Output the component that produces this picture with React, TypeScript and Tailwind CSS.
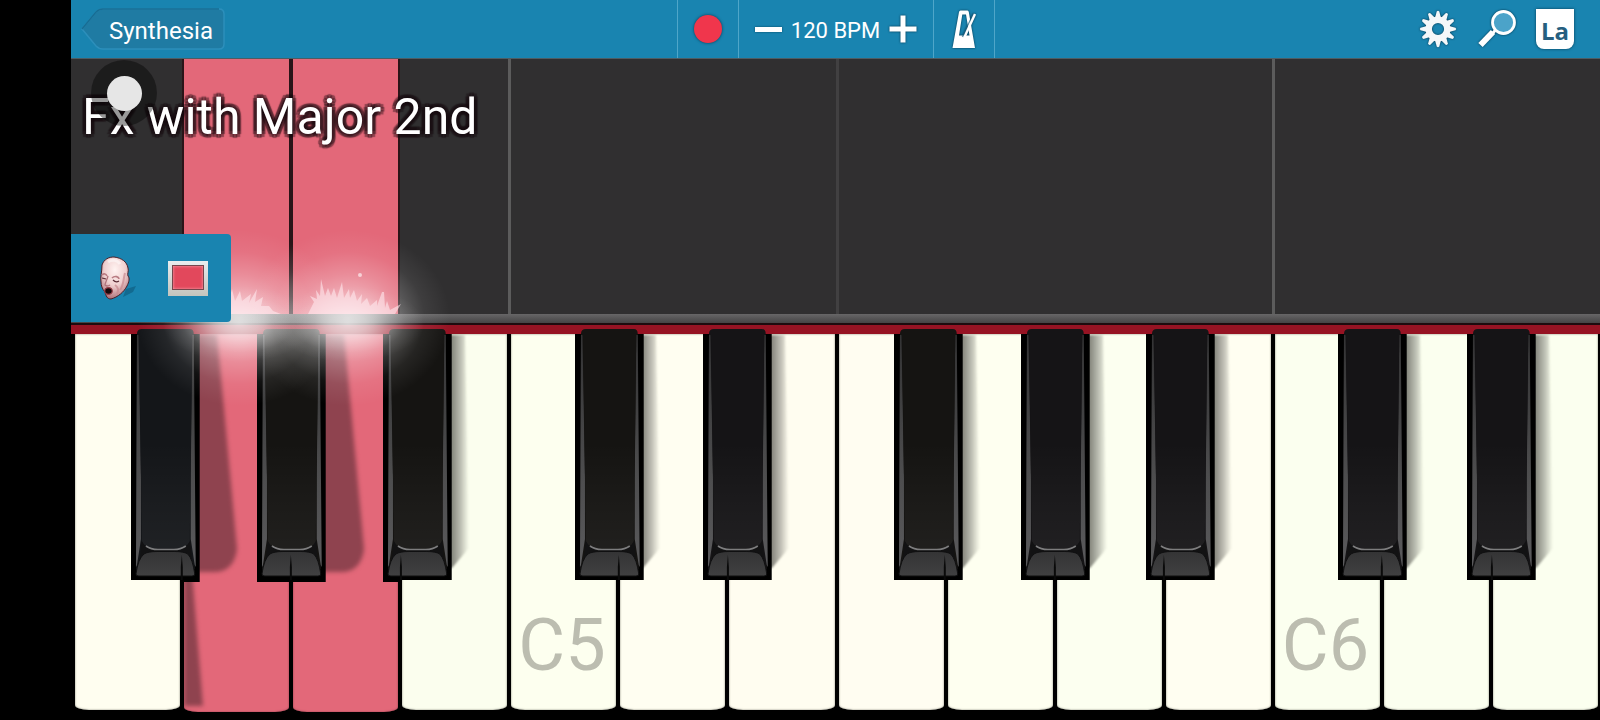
import React from 'react';

interface PianoKey {
  note: string;
  tint: string;
  lit?: boolean;
  label?: string;
  line?: string;
  sharp?: { note: string; left: string; seam: number; face: string };
}

const BLUE_FACE = '#141619';
const WARM_FACE = '#151412';
const VIOLET_FACE = '#151416';

const KEYS: PianoKey[] = [
  { note: 'F4', tint: 'bg-[#fffef0]', sharp: { note: 'F#4', left: 'left-[53%]', seam: 51, face: BLUE_FACE } },
  { note: 'G4', tint: 'bg-[#e36879]', lit: true, sharp: { note: 'G#4', left: 'left-[69%]', seam: 34, face: WARM_FACE } },
  { note: 'A4', tint: 'bg-[#e36879]', lit: true, sharp: { note: 'A#4', left: 'left-[84%]', seam: 18, face: WARM_FACE } },
  { note: 'B4', tint: 'bg-[#fbfeee]' },
  { note: 'C5', tint: 'bg-[#fdffef]', label: 'C5', line: 'bg-[#5c5c5c]', sharp: { note: 'C#5', left: 'left-[60%]', seam: 44, face: WARM_FACE } },
  { note: 'D5', tint: 'bg-[#fffef1]', sharp: { note: 'D#5', left: 'left-[78%]', seam: 25, face: VIOLET_FACE } },
  { note: 'E5', tint: 'bg-[#fffdf0]' },
  { note: 'F5', tint: 'bg-[#fffdf1]', line: 'bg-[#414041]', sharp: { note: 'F#5', left: 'left-[53%]', seam: 51, face: WARM_FACE } },
  { note: 'G5', tint: 'bg-[#fefff0]', sharp: { note: 'G#5', left: 'left-[69%]', seam: 34, face: VIOLET_FACE } },
  { note: 'A5', tint: 'bg-[#fcfff0]', sharp: { note: 'A#5', left: 'left-[84%]', seam: 18, face: VIOLET_FACE } },
  { note: 'B5', tint: 'bg-[#fffef1]' },
  { note: 'C6', tint: 'bg-[#fbffef]', label: 'C6', line: 'bg-[#5c5c5c]', sharp: { note: 'C#6', left: 'left-[60%]', seam: 44, face: VIOLET_FACE } },
  { note: 'D6', tint: 'bg-[#fbffef]', sharp: { note: 'D#6', left: 'left-[78%]', seam: 25, face: VIOLET_FACE } },
  { note: 'E6', tint: 'bg-[#fbffef]' },
];

const GEAR_TEETH = [0, 30, 60, 90, 120, 150, 180, 210, 240, 270, 300, 330];

const GearIcon = () => (
  <svg viewBox="-20 -20 40 40" className="w-10 h-10 drop-shadow-[0_0_1px_rgba(0,40,60,0.9)]">
    {GEAR_TEETH.map(angle => (
      <path key={angle} d="M-3 -11 L-1.3 -17.5 Q0 -19 1.3 -17.5 L3 -11 Z" fill="#f4f7f9" transform={`rotate(${angle})`} />
    ))}
    <circle r="9.3" fill="none" stroke="#f4f7f9" strokeWidth="6.4" />
  </svg>
);

const MagnifierIcon = () => (
  <svg viewBox="0 0 40 40" className="w-10 h-10 drop-shadow-[0_0_1px_rgba(0,40,60,0.9)]">
    <path d="M3.5 36 L16 23" stroke="#fff" strokeWidth="6" />
    <path d="M15 25 L18.5 21" stroke="#fff" strokeWidth="3" />
    <circle cx="26.5" cy="13.5" r="11" fill="#4ba3c9" stroke="#fff" strokeWidth="2.8" />
  </svg>
);

const MetronomeIcon = () => (
  <svg viewBox="0 0 24 38" className="w-6 h-[38px] drop-shadow-[0_0_1px_rgba(0,40,60,0.9)]">
    <path fillRule="evenodd" fill="#fff" d="M8.5 0.5 H15.5 Q16.5 0.5 16.8 2 L23 38 H0.5 L7 2 Q7.3 0.5 8.5 0.5 Z M10.3 4.5 L7 25.5 H17.5 L14 4.5 Z" />
    <path d="M10.5 27 L21.5 3.5" stroke="#1f6484" strokeWidth="1.6" opacity="0.7" />
    <path d="M12.5 27 L23 4" stroke="#fff" strokeWidth="2.4" />
  </svg>
);

const FaceIcon = () => (
  <svg viewBox="0 0 38 44" className="w-[38px] h-11">
    <defs>
      <radialGradient id="skin" cx="0.5" cy="0.3" r="0.75">
        <stop offset="0" stopColor="#fff3f1" />
        <stop offset="0.5" stopColor="#f0d0d0" />
        <stop offset="1" stopColor="#a9656d" />
      </radialGradient>
    </defs>
    <path d="M27 33 L37 30 L34 36 L24 41 Z" fill="#126a90" />
    <path d="M3 9 C5 3 10 1 15 1 C23 2 28 6 29 12 C30 15 28 18 29 20 C31 22 30 26 28 30 C25 36 19 41 12 43 C8 43 7 40 6 36 C3 33 2 29 2 26 C1 22 3 16 3 9 Z" fill="url(#skin)" stroke="#4a2029" strokeWidth="1" />
    <path d="M3 19 C5 17 7 18 8 20 M13 22 C16 19 20 21 20 23" fill="none" stroke="#b97c83" strokeWidth="1.6" />
    <path d="M3 22 L7 23 M14 24 Q17 27 20 25" fill="none" stroke="#5b2c35" strokeWidth="1.2" />
    <path d="M9 20 C8 24 6 27 6 29 Q8 31 11 29" fill="none" stroke="#b0747b" strokeWidth="1.3" />
    <path d="M16 29 C19 31 20 34 18 38 M26 17 C24 24 25 29 21 34" fill="none" stroke="#c8898f" strokeWidth="2" opacity="0.7" />
    <ellipse cx="9.5" cy="35" rx="3.8" ry="3.4" fill="#16090c" stroke="#9c3f49" strokeWidth="1.2" />
    <path d="M9 6 C13 3 19 4 21 8" fill="none" stroke="#fff" strokeWidth="3" opacity="0.5" />
  </svg>
);

interface BlackKeyProps {
  face: string;
  seam: number;
  leftDown?: boolean;
  rightDown?: boolean;
}

const BlackKey = ({ face, seam, leftDown, rightDown }: BlackKeyProps) => (
  <svg viewBox="0 0 69 251" preserveAspectRatio="none" className="block w-full h-[251px] overflow-visible">
    <defs>
      <linearGradient id="cap" x1="0" x2="0" y1="0" y2="1">
        <stop offset="0" stopColor="#343435" />
        <stop offset="1" stopColor="#404041" />
      </linearGradient>
      <linearGradient id="bevel" x1="0" x2="0" y1="0" y2="1">
        <stop offset="0" stopColor="#333334" />
        <stop offset="0.6" stopColor="#4d4d4e" />
        <stop offset="1" stopColor="#5a5a5c" />
      </linearGradient>
      <linearGradient id="sheen" x1="0" x2="0" y1="0" y2="1">
        <stop offset="0.5" stopColor="#fff" stopOpacity="0" />
        <stop offset="1" stopColor="#fff" stopOpacity="0.05" />
      </linearGradient>
    </defs>
    <path d={`M0 5 H69 V${rightDown ? 253 : 251} H${seam} V${leftDown ? 253 : 251} H0 Z`} fill="#000" />
    <path d="M6 5 Q6 0 11 0 H59 Q63 0 63 5 L64 240 H5 Z" fill={face} />
    <path d="M6 6 L7.5 6 L10 150 V210 L6 236 L5 238 Z M63 6 L61.5 6 L60 150 V210 L64 236 L65 238 Z" fill="url(#bevel)" />
    <path d="M8 6 H61.5 L59 212 Q56 221 47 221 H23 Q14 221 11 212 Z" fill={face} />
    <path d="M8 6 H61.5 L59 212 Q56 221 47 221 H23 Q14 221 11 212 Z" fill="url(#sheen)" />
    <path d="M10.5 212 Q16 221 26 221 H44 Q54 221 59.5 212 L61 230 H9 Z" fill="#121213" />
    <path d="M15 217 Q20 220.5 27 220.5 H43 Q50 220.5 55 217" fill="none" stroke="#7d7d7e" strokeWidth="1.6" />
    <path d="M5 245 Q7 230 13 225 Q17 222.5 26 222.5 H44 Q53 222.5 57 225 Q62 230 64 245 Q64 247 61 247 H8 Q5 247 5 245 Z" fill="url(#cap)" stroke="#101011" strokeWidth="1" />
    <path d={`M${seam - 1} 251 V238 L${seam} 226 L${seam + 1} 238 V251 Z`} fill="#0a0a0a" />
  </svg>
);

const FLAMES = {
  small: 'M-38 -2 L-35 -14 L-31 -9 L-33 -22 L-27 -13 L-24 -36 L-21 -18 L-18 -28 L-15 -17 L-11 -29 L-8 -16 L-5 -27 L-2 -15 L3 -25 L5 -15 L14 -22 L12 -13 L20 -27 L18 -14 L26 -19 L24 -10 L32 -10 L36 -5 L44 -2 Z',
  large: 'M-38 -2 L-32 -14 L-36 -20 L-29 -17 L-30 -26 L-26 -20 L-25 -37 L-21 -20 L-18 -28 L-15 -20 L-12 -28 L-9 -18 L-4 -34 L-2 -18 L3 -27 L4 -18 L8 -26 L11 -15 L16 -22 L15 -12 L21 -18 L24 -10 L31 -16 L31 -10 L36 -24 L38 -24 L39 -8 L41 -15 L44 -6 L55 -12 L49 -2 Z',
};

// light burst above a sounding note
const Glow = ({ id, flame, spark }: { id: string; flame: string; spark?: boolean }) => (
  <svg viewBox="-120 -110 240 220" className="pointer-events-none absolute left-1/2 -bottom-[112px] z-20 w-60 h-[220px] -translate-x-1/2">
    <defs>
      <radialGradient id={id}>
        <stop offset="0" stopColor="#fff" stopOpacity="0.6" />
        <stop offset="0.25" stopColor="#fff" stopOpacity="0.46" />
        <stop offset="0.5" stopColor="#fff" stopOpacity="0.24" />
        <stop offset="0.75" stopColor="#fff" stopOpacity="0.07" />
        <stop offset="1" stopColor="#fff" stopOpacity="0" />
      </radialGradient>
    </defs>
    <ellipse cx="2" cy="2" rx="102" ry="88" fill={`url(#${id})`} />
    <ellipse cx="2" cy="8" rx="76" ry="38" fill={`url(#${id})`} />
    <path d={flame} fill="#ffe9ee" opacity="0.6" className="blur-[0.5px]" />
    {spark && <circle cx="14" cy="-41" r="2" fill="#fff" opacity="0.6" />}
  </svg>
);

const TopBar = () => (
  <header className="grid grid-cols-[1fr_auto_1fr] h-[58px] bg-[#1984b0] text-white shadow-[0_1px_0_#4d5c63] z-10">
    <div className="flex items-center pl-[10px]">
      <button className="relative w-36 h-[42px] pl-7 pr-3 pt-1 text-2xl leading-6 text-left">
        <svg viewBox="0 0 144 42" className="absolute inset-0 w-full h-full">
          <path d="M1 21 L15 4 Q18 1 22 1 H138 Q143 1 143 6 V36 Q143 41 138 41 H22 Q18 41 15 38 Z" fill="#1f7ba3" stroke="#2c8fbb" strokeWidth="1.5" />
          <path d="M1 21 L15 4 Q18 1 22 1 H138" fill="none" stroke="#176d94" strokeWidth="1.5" />
        </svg>
        <span className="relative">Synthesia</span>
      </button>
    </div>
    <div className="flex items-stretch border-x border-[#4fa6c9]">
      <button aria-label="Record" className="flex w-[61px] items-center justify-center border-r border-[#4fa6c9]">
        <span className="w-7 h-7 rounded-full bg-[#f0364c] shadow-[0_0_3px_rgba(0,40,60,0.8)]" />
      </button>
      <div className="flex w-[195px] items-center justify-between border-r border-[#4fa6c9] px-[14px]">
        <button aria-label="Slower" className="flex w-8 h-8 items-center justify-center">
          <span className="w-[27px] h-[5px] bg-white shadow-[0_0_2px_rgba(0,40,60,0.8)]" />
        </button>
        <span className="pt-1 text-[22px] leading-6 whitespace-nowrap">120 BPM</span>
        <button aria-label="Faster" className="flex w-8 h-8 items-center justify-center">
          <svg viewBox="0 0 28 28" className="w-7 h-7 drop-shadow-[0_0_1px_rgba(0,40,60,0.9)]">
            <path d="M14 0.5 V27.5 M0.5 14 H27.5" stroke="#fff" strokeWidth="5" />
          </svg>
        </button>
      </div>
      <button aria-label="Metronome" className="flex w-[60px] items-center justify-center">
        <MetronomeIcon />
      </button>
    </div>
    <div className="flex items-center justify-end gap-[19px] pr-[26px]">
      <button aria-label="Settings"><GearIcon /></button>
      <button aria-label="Zoom"><MagnifierIcon /></button>
      <button className="w-[38px] h-10 rounded-b-lg bg-white pt-1 font-['Open_Sans',sans-serif] text-2xl leading-7 font-bold text-[#265f80] shadow-[0_0_3px_rgba(0,40,60,0.8)]">
        La
      </button>
    </div>
  </header>
);

const Lanes = () => (
  <section className="relative flex h-64 bg-[#302f30] pl-[2px]">
    {KEYS.map((key, index) => (
      <div key={key.note} className="relative flex-1">
        {key.line && <div className={`absolute inset-y-0 -left-px w-[3px] ${key.line}`} />}
        {key.lit && (
          <>
            <div className="h-full border-x-2 border-[#2a1418] bg-[#e36879]" />
            <Glow id={`glow-${key.note}`} flame={index === 1 ? FLAMES.small : FLAMES.large} spark={index === 2} />
          </>
        )}
      </div>
    ))}
    <h1 className="absolute left-[11px] top-[31px] z-20 text-[50px] leading-[56px] whitespace-nowrap text-white [text-shadow:4px_0_1px_#14080c66,-4px_0_1px_#14080c66,0_4px_1px_#14080c66,0_-4px_1px_#14080c66,3px_3px_1px_#14080c66,-3px_3px_1px_#14080c66,3px_-3px_1px_#14080c66,-3px_-3px_1px_#14080c66]">
      Fx with Major 2nd
    </h1>
    <div className="absolute left-5 top-[2px] z-20 flex w-[66px] h-[66px] items-center justify-center rounded-full bg-black/40">
      <div className="w-[35px] h-[35px] rounded-full bg-[#e6e6e6]" />
    </div>
    <div className="absolute left-0 top-[176px] z-30 flex w-40 h-[88px] items-center gap-[31px] rounded-r bg-[#1984b0] pl-7">
      <button aria-label="Instrument"><FaceIcon /></button>
      <button aria-label="Note color" className="w-10 h-[35px] bg-linear-to-b from-[#e9edef] to-[#c3c4bd] px-1 pt-1 pb-[6px]">
        <span className="block h-full border border-[#75464c] bg-[#e2485c] shadow-[inset_0_0_3px_#f5aab2]" />
      </button>
    </div>
  </section>
);

const Keyboard = () => (
  <section className="flex pl-[2px]">
    {KEYS.map((key, index) => {
      const nextLit = KEYS[index + 1]?.lit;
      return (
        <div key={key.note} className="relative flex-1 px-[2px]">
          <button
            aria-label={key.note}
            className={`relative flex w-full items-end overflow-hidden rounded-b-[14px_5px] pl-[7px] pb-7 ${key.tint} ${
              key.lit ? 'h-[378px] shadow-[inset_0_0_2px_#8d3b48]' : 'h-[376px] shadow-[inset_0_0_2px_#77776d]'
            }`}
          >
            {key.lit && (
              <svg viewBox="0 0 105 378" preserveAspectRatio="none" className="absolute inset-0 w-full h-full blur-[2px]">
                {index === 1 ? (
                  <path d="M-6 0 H33 L53 215 Q50 238 30 238 H8 L19 372 H-6 Z" fill="#8f434f" />
                ) : (
                  <path d="M0 0 H51 L71 215 Q68 238 48 238 H0 Z" fill="#8f434f" />
                )}
              </svg>
            )}
            {key.label && <span className="text-7xl leading-[72px] text-[#bcbdb0]">{key.label}</span>}
          </button>
          {key.sharp && (
            <div className={`absolute -top-[5px] z-10 w-[63%] ${key.sharp.left}`}>
              {!nextLit && (
                <svg viewBox="0 0 24 240" className="absolute left-full top-[5px] -ml-1 w-6 h-60 blur-[1px]">
                  <defs>
                    <linearGradient id="key-shadow" x1="0" x2="1" y1="0" y2="0">
                      <stop offset="0.2" stopColor="#3a3a34" stopOpacity="0.6" />
                      <stop offset="0.6" stopColor="#3a3a34" stopOpacity="0.32" />
                      <stop offset="1" stopColor="#3a3a34" stopOpacity="0" />
                    </linearGradient>
                  </defs>
                  <path d="M0 1 H17 L21 214 L4 234 H0 Z" fill="url(#key-shadow)" />
                </svg>
              )}
              <button aria-label={key.sharp.note} className="relative block w-full">
                <BlackKey face={key.sharp.face} seam={key.sharp.seam} leftDown={key.lit} rightDown={nextLit} />
              </button>
            </div>
          )}
        </div>
      );
    })}
  </section>
);

export default function App() {
  return (
    <div className="flex min-h-screen overflow-hidden bg-black pl-[71px] font-[Roboto,sans-serif]">
      <main className="flex min-w-0 flex-1 flex-col">
        <TopBar />
        <Lanes />
        <div className="h-[9px] bg-linear-to-b from-[#676667] to-[#454445]" />
        <div className="h-[2px] bg-[#1d0b0e]" />
        <div className="h-[9px] bg-[#961323]" />
        <Keyboard />
      </main>
    </div>
  );
}
